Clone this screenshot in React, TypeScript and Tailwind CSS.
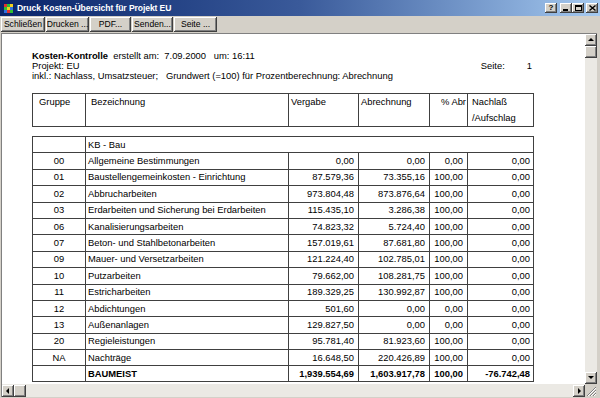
import React from 'react'

const bevel =
  'bg-[#d4d0c8] shadow-[inset_-1px_-1px_0_#404040,inset_1px_1px_0_#ffffff,inset_-2px_-2px_0_#808080,inset_2px_2px_0_#d4d0c8]'

const cols = 'grid grid-cols-[53px_203px_70px_71px_38px_66px]'
const line = 'border-[#404040]'

const rows = [
  ['00', 'Allgemeine Bestimmungen', '0,00', '0,00', '0,00', '0,00'],
  ['01', 'Baustellengemeinkosten - Einrichtung', '87.579,36', '73.355,16', '100,00', '0,00'],
  ['02', 'Abbrucharbeiten', '973.804,48', '873.876,64', '100,00', '0,00'],
  ['03', 'Erdarbeiten und Sicherung bei Erdarbeiten', '115.435,10', '3.286,38', '100,00', '0,00'],
  ['06', 'Kanalisierungsarbeiten', '74.823,32', '5.724,40', '100,00', '0,00'],
  ['07', 'Beton- und Stahlbetonarbeiten', '157.019,61', '87.681,80', '100,00', '0,00'],
  ['09', 'Mauer- und Versetzarbeiten', '121.224,40', '102.785,01', '100,00', '0,00'],
  ['10', 'Putzarbeiten', '79.662,00', '108.281,75', '100,00', '0,00'],
  ['11', 'Estricharbeiten', '189.329,25', '130.992,87', '100,00', '0,00'],
  ['12', 'Abdichtungen', '501,60', '0,00', '0,00', '0,00'],
  ['13', 'Außenanlagen', '129.827,50', '0,00', '0,00', '0,00'],
  ['20', 'Regieleistungen', '95.781,40', '81.923,60', '100,00', '0,00'],
  ['NA', 'Nachträge', '16.648,50', '220.426,89', '100,00', '0,00'],
]

function Arrow({ dir }: { dir: 'up' | 'down' | 'left' | 'right' }) {
  const pts = {
    up: '1,5 4,2 7,5',
    down: '1,2 4,5 7,2',
    left: '5,1 2,4 5,7',
    right: '3,1 6,4 3,7',
  }[dir]
  return (
    <div className={`${bevel} flex items-center justify-center`}>
      <svg width="8" height="8" viewBox="0 0 8 8">
        <polygon points={pts} fill="#000" />
      </svg>
    </div>
  )
}

function TitleButton({ children, gap }: { children: React.ReactNode; gap?: string }) {
  return (
    <div className={`${bevel} w-[12px] h-[10px] flex items-center justify-center ${gap ?? ''}`}>
      {children}
    </div>
  )
}

export default function App() {
  const toolbar = [
    ['Schließen', 'w-[44px]'],
    ['Drucken ...', 'w-[43px]'],
    ['PDF...', 'w-[41px]'],
    ['Senden...', 'w-[41px]'],
    ['Seite ...', 'w-[43px]'],
  ]

  return (
    <div className="w-[600px] h-[398px] bg-[#d4d0c8] flex flex-col overflow-hidden font-['Liberation_Sans',Arial,sans-serif] text-black">
      {/* title bar */}
      <div className="h-[16px] bg-linear-to-r from-[#0a246a] via-[#3a5a9a] to-[#a6caf0] flex items-center pl-[3px]">
        <svg width="11" height="11" viewBox="0 0 11 11" className="shrink-0">
          <rect width="11" height="11" fill="#0a246a" />
          <rect x="1" y="1" width="3" height="3" fill="#e03030" />
          <rect x="4" y="1" width="3" height="3" fill="#30c030" />
          <rect x="7" y="1" width="3" height="3" fill="#f0d020" />
          <rect x="1" y="4" width="3" height="3" fill="#30c030" />
          <rect x="4" y="4" width="3" height="3" fill="#f0d020" />
          <rect x="7" y="4" width="3" height="3" fill="#3070e0" />
          <rect x="1" y="7" width="3" height="3" fill="#3070e0" />
          <rect x="4" y="7" width="3" height="3" fill="#e03030" />
          <rect x="7" y="7" width="3" height="3" fill="#30c030" />
        </svg>
        <span className="ml-[3px] text-white font-bold text-[8.6px] leading-none tracking-[-0.1px]">
          Druck Kosten-Übersicht für Projekt EU
        </span>
        <div className="ml-auto flex items-center">
          <TitleButton gap="mr-[3px]">
            <span className="text-[8px] font-bold leading-none">?</span>
          </TitleButton>
          <TitleButton>
            <svg width="6" height="6" viewBox="0 0 6 6"><rect x="0" y="4" width="5" height="2" fill="#000" /></svg>
          </TitleButton>
          <TitleButton gap="mr-[2px]">
            <svg width="7" height="6" viewBox="0 0 7 6"><rect x="0.5" y="0.5" width="6" height="5" fill="none" stroke="#000" /><rect x="0" y="0" width="7" height="2" fill="#000" /></svg>
          </TitleButton>
          <TitleButton gap="mr-[2px]">
            <svg width="7" height="6" viewBox="0 0 7 6"><path d="M0.5 0.5 L6.5 5.5 M6.5 0.5 L0.5 5.5" stroke="#000" strokeWidth="1.4" /></svg>
          </TitleButton>
        </div>
      </div>

      {/* toolbar */}
      <div className="h-[17px] flex items-start gap-[1px] pl-[1px] pt-[1px]">
        {toolbar.map(([label, w]) => (
          <div key={label} className={`${bevel} ${w} h-[15px] flex items-center justify-center text-[8.6px] leading-none`}>
            {label}
          </div>
        ))}
      </div>

      {/* document panel */}
      <div className="flex-1 min-h-0 ml-[1px] mr-[3px] mb-[1px] border-t border-l border-[#808080] grid grid-cols-[1fr_12px] grid-rows-[1fr_13px]">
        <div className="bg-white overflow-hidden text-[9.4px]">
          <div className="pl-[30px] pt-[17px] leading-[10px]">
            <div className="whitespace-pre">
              <span className="font-bold">Kosten-Kontrolle</span>
              {'  erstellt am:  7.09.2000   um: 16:11'}
            </div>
            <div className="flex w-[501px]">
              <span>Projekt: EU</span>
              <span className="ml-auto w-[46px]">Seite:</span>
              <span className="pr-[1px]">1</span>
            </div>
            <div className="whitespace-pre">
              {'inkl.: Nachlass, Umsatzsteuer;   Grundwert (=100) für Prozentberechnung: Abrechnung'}
            </div>

            {/* header table */}
            <div className={`${cols} w-[502px] mt-[12px] border-t border-b border-r ${line} h-[34px] leading-[16px]`}>
              <div className={`border-l ${line} pl-[6px]`}>Gruppe</div>
              <div className={`border-l ${line} pl-[5px]`}>Bezeichnung</div>
              <div className={`border-l ${line} pl-[2px]`}>Vergabe</div>
              <div className={`border-l ${line} pl-[2px]`}>Abrechnung</div>
              <div className={`border-l ${line} text-right pr-[1px] whitespace-nowrap overflow-hidden`}>% Abr</div>
              <div className={`border-l ${line} pl-[4px]`}>
                Nachlaß
                <br />
                /Aufschlag
              </div>
            </div>

            {/* body table */}
            <div className={`w-[502px] mt-[9px] border-r ${line}`}>
              <div className={`${cols} h-[16.4px] border-t ${line}`}>
                <div className={`border-l ${line}`} />
                <div className={`border-l ${line} col-span-5 flex items-center pl-[2px]`}>KB - Bau</div>
              </div>
              {rows.map((r) => (
                <div key={r[0]} className={`${cols} h-[16.4px] border-t ${line}`}>
                  <div className={`border-l ${line} flex items-center justify-center`}>{r[0]}</div>
                  <div className={`border-l ${line} flex items-center pl-[2px] whitespace-nowrap`}>{r[1]}</div>
                  <div className={`border-l ${line} flex items-center justify-end pr-[4px]`}>{r[2]}</div>
                  <div className={`border-l ${line} flex items-center justify-end pr-[4px]`}>{r[3]}</div>
                  <div className={`border-l ${line} flex items-center justify-end pr-[4px]`}>{r[4]}</div>
                  <div className={`border-l ${line} flex items-center justify-end pr-[3px]`}>{r[5]}</div>
                </div>
              ))}
              <div className={`${cols} h-[16.4px] border-t border-b ${line} font-bold`}>
                <div className={`border-l ${line}`} />
                <div className={`border-l ${line} flex items-center pl-[2px]`}>BAUMEIST</div>
                <div className={`border-l ${line} flex items-center justify-end pr-[4px]`}>1,939.554,69</div>
                <div className={`border-l ${line} flex items-center justify-end pr-[4px]`}>1,603.917,78</div>
                <div className={`border-l ${line} flex items-center justify-end pr-[4px]`}>100,00</div>
                <div className={`border-l ${line} flex items-center justify-end pr-[3px]`}>-76.742,48</div>
              </div>
            </div>
          </div>
        </div>

        {/* vertical scrollbar */}
        <div className="grid grid-rows-[12px_12px_1fr_12px] bg-[#ebe9e4]">
          <Arrow dir="up" />
          <div className={bevel} />
          <div />
          <Arrow dir="down" />
        </div>

        {/* horizontal scrollbar */}
        <div className="grid grid-cols-[12px_12px_1fr_12px] bg-[#ebe9e4] pt-[1px]">
          <Arrow dir="left" />
          <div className={bevel} />
          <div />
          <Arrow dir="right" />
        </div>

        {/* size grip */}
        <div className="bg-[#d4d0c8] flex items-end justify-end">
          <svg width="11" height="11" viewBox="0 0 11 11">
            <path d="M10 1 L1 10 M10 4 L4 10 M10 7 L7 10" stroke="#808080" strokeWidth="1" />
            <path d="M10 2 L2 10 M10 5 L5 10 M10 8 L8 10" stroke="#ffffff" strokeWidth="1" />
          </svg>
        </div>
      </div>
    </div>
  )
}
